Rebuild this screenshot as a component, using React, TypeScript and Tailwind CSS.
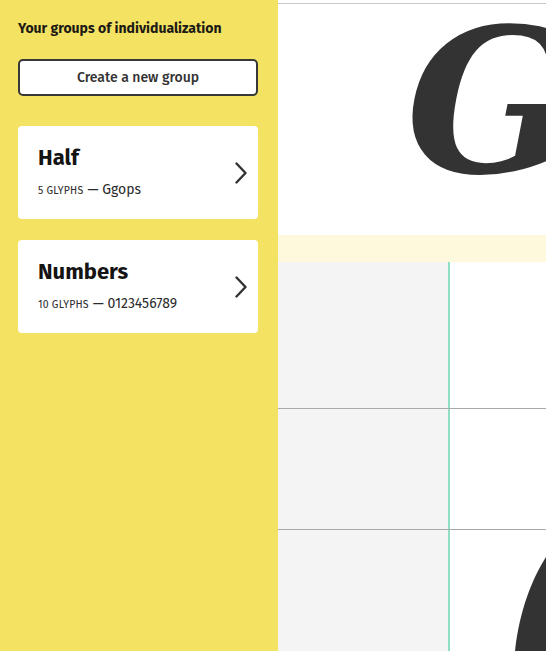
const groups = [
  { name: "Half", count: 5, glyphs: "Ggops" },
  { name: "Numbers", count: 10, glyphs: "0123456789" },
]

const sans = { fontFamily: "'Fira Sans', Lato, 'Open Sans', sans-serif" }

function Chevron() {
  return (
    <svg width="12" height="22" viewBox="0 0 12 22" fill="none">
      <path
        d="M1.5 1.5 L10.5 11 L1.5 20.5"
        stroke="#333"
        strokeWidth="2.4"
        strokeLinecap="round"
        strokeLinejoin="round"
      />
    </svg>
  )
}

function GroupCard({ name, count, glyphs }: { name: string; count: number; glyphs: string }) {
  return (
    <button
      type="button"
      className="flex h-[93px] w-full items-center justify-between rounded-[4px] bg-white pr-[11px] pl-[20px] text-left"
    >
      <span className="-mt-[2px] flex flex-col">
        <span className="text-[22px] leading-[28px] font-bold text-[#141414]">{name}</span>
        <span className="mt-[7px] flex items-baseline gap-[4px] text-[#2b2b2b]">
          <span className="text-[10.5px] tracking-[0.02em] uppercase">{count} glyphs</span>
          <span className="text-[14px]">— {glyphs}</span>
        </span>
      </span>
      <Chevron />
    </button>
  )
}

function Row({ className }: { className: string }) {
  return (
    <div className={`flex ${className}`}>
      <div className="w-[170px] bg-[#f4f4f4]" />
      <div className="w-[2px] bg-[#8edfc3]" />
      <div className="flex-1 bg-white" />
    </div>
  )
}

export default function App() {
  return (
    <div className="flex h-[651px] w-[546px] overflow-hidden bg-white" style={sans}>
      <aside className="flex w-[278px] shrink-0 flex-col bg-[#f4e263] pt-[20px] pr-[20px] pl-[18px]">
        <h2 className="text-[14px] leading-[18px] font-bold text-[#1c1a14]">
          Your groups of individualization
        </h2>
        <button
          type="button"
          className="mt-[21px] h-[37px] w-full rounded-[5px] border-2 border-[#383838] bg-white text-[14px] font-medium text-[#333]"
        >
          Create a new group
        </button>
        <div className="mt-[30px] flex flex-col gap-[21px]">
          {groups.map((g) => (
            <GroupCard key={g.name} {...g} />
          ))}
        </div>
      </aside>

      <main className="flex flex-1 flex-col">
        <div className="h-[3px] bg-white" />
        <div className="relative h-[232px] overflow-hidden border-t border-[#c8c8c8] bg-white">
          <span
            className="absolute top-[-2px] left-[128px] text-[200px] leading-none font-bold text-[#333] italic"
            style={{ fontFamily: "'DejaVu Serif', serif" }}
          >
            G
          </span>
        </div>
        <div className="h-[27px] bg-[#fef8dc]" />
        <div className="relative flex flex-1 flex-col">
          <Row className="h-[147px] border-b border-[#a9a9a9]" />
          <Row className="h-[121px] border-b border-[#a9a9a9]" />
          <Row className="flex-1" />
          <svg
            className="absolute right-0 bottom-0"
            width="40"
            height="100"
            viewBox="0 0 40 100"
          >
            <path d="M40 6 C27 26 13 60 9 100 L40 100 Z" fill="#333" />
          </svg>
        </div>
      </main>
    </div>
  )
}
